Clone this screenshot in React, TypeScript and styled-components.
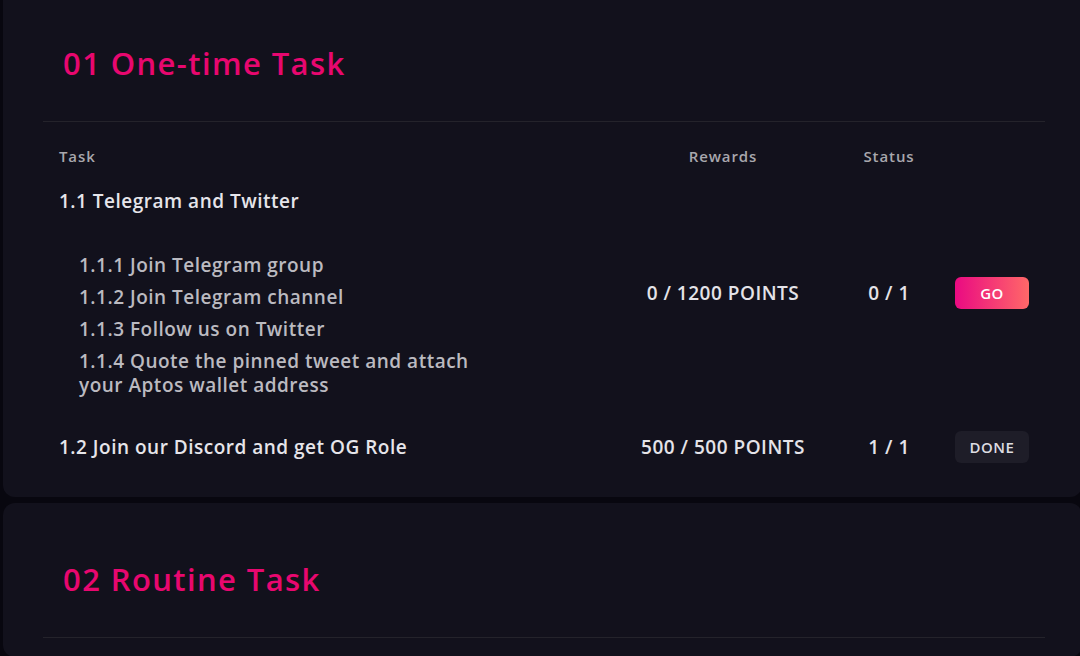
import React from "react";
import styled, { createGlobalStyle } from "styled-components";

const Global = createGlobalStyle`
  html, body { margin: 0; padding: 0; background: #08070f; overflow: hidden; }
  body { font-family: "Open Sans", "Noto Sans", sans-serif; -webkit-font-smoothing: antialiased; }
  * { box-sizing: border-box; }
`;

const Page = styled.div`
  width: 1080px;
  height: 656px;
  overflow: hidden;
  padding-left: 3px;
  display: flex;
  flex-direction: column;
  gap: 6px;
`;

const Card = styled.section<{ $first?: boolean }>`
  width: 1079px;
  flex-shrink: 0;
  margin-top: ${(p) => (p.$first ? "-13px" : "0")};
  background: #12111c;
  border-radius: 12px;
  padding: 56px 37px 19px 40px;
`;

const Heading = styled.h2`
  margin: 0 0 38px;
  padding-left: 20px;
  font-size: 31px;
  line-height: 40px;
  font-weight: 600;
  color: #e8076f;
  letter-spacing: 1.4px;
`;

const Divider = styled.div`
  height: 1px;
  background: #24232b;
`;

const Row = styled.div<{ $header?: boolean }>`
  display: grid;
  grid-template-columns: 562px 236px 96px 108px;
  align-items: center;
  padding: ${(p) => (p.$header ? "24px 0 4px" : "19px 0")};
`;

const HeadCell = styled.div<{ $center?: boolean }>`
  font-size: 15px;
  line-height: 20px;
  font-weight: 600;
  letter-spacing: 0.9px;
  color: #a8a7ad;
  text-align: ${(p) => (p.$center ? "center" : "left")};
  padding-left: ${(p) => (p.$center ? "0" : "16px")};
`;

const TaskCell = styled.div`
  padding-left: 16px;
`;

const TaskTitle = styled.div`
  font-size: 19px;
  line-height: 24px;
  font-weight: 600;
  letter-spacing: 0.5px;
  color: #e6e5ea;
`;

const SubList = styled.ul`
  list-style: none;
  margin: 40px 0 0;
  padding: 0 0 0 20px;
  max-width: 440px;
  display: flex;
  flex-direction: column;
  gap: 8px;
`;

const SubItem = styled.li`
  font-size: 19px;
  line-height: 24px;
  font-weight: 600;
  letter-spacing: 0.5px;
  color: #bbbac0;
`;

const ValueCell = styled.div`
  text-align: center;
  font-size: 19px;
  line-height: 24px;
  font-weight: 600;
  letter-spacing: 0.5px;
  color: #e4e3e8;
`;

const ActionCell = styled.div`
  height: 24px;
  padding-left: 2px;
  display: flex;
  align-items: center;
  justify-content: center;
`;

const ActionButton = styled.button<{ $done?: boolean }>`
  flex-shrink: 0;
  width: 74px;
  height: 32px;
  border: none;
  border-radius: 6px;
  font-family: inherit;
  font-size: 15px;
  font-weight: 600;
  letter-spacing: 0.5px;
  cursor: pointer;
  color: ${(p) => (p.$done ? "#dddce2" : "#ffffff")};
  background: ${(p) =>
    p.$done ? "#1e1d28" : "linear-gradient(90deg, #ea0a82 0%, #ff6868 100%)"};
`;

const subtasks = [
  "1.1.1 Join Telegram group",
  "1.1.2 Join Telegram channel",
  "1.1.3 Follow us on Twitter",
  "1.1.4 Quote the pinned tweet and attach your Aptos wallet address",
];

export default function App() {
  return (
    <>
      <Global />
      <Page>
        <Card $first>
          <Heading>01 One-time Task</Heading>
          <Divider />
          <Row $header>
            <HeadCell>Task</HeadCell>
            <HeadCell $center>Rewards</HeadCell>
            <HeadCell $center>Status</HeadCell>
            <div />
          </Row>
          <Row>
            <TaskCell>
              <TaskTitle>1.1 Telegram and Twitter</TaskTitle>
              <SubList>
                {subtasks.map((s) => (
                  <SubItem key={s}>{s}</SubItem>
                ))}
              </SubList>
            </TaskCell>
            <ValueCell>0 / 1200 POINTS</ValueCell>
            <ValueCell>0 / 1</ValueCell>
            <ActionCell>
              <ActionButton>GO</ActionButton>
            </ActionCell>
          </Row>
          <Row>
            <TaskCell>
              <TaskTitle>1.2 Join our Discord and get OG Role</TaskTitle>
            </TaskCell>
            <ValueCell>500 / 500 POINTS</ValueCell>
            <ValueCell>1 / 1</ValueCell>
            <ActionCell>
              <ActionButton $done>DONE</ActionButton>
            </ActionCell>
          </Row>
        </Card>
        <Card>
          <Heading>02 Routine Task</Heading>
          <Divider />
        </Card>
      </Page>
    </>
  );
}
